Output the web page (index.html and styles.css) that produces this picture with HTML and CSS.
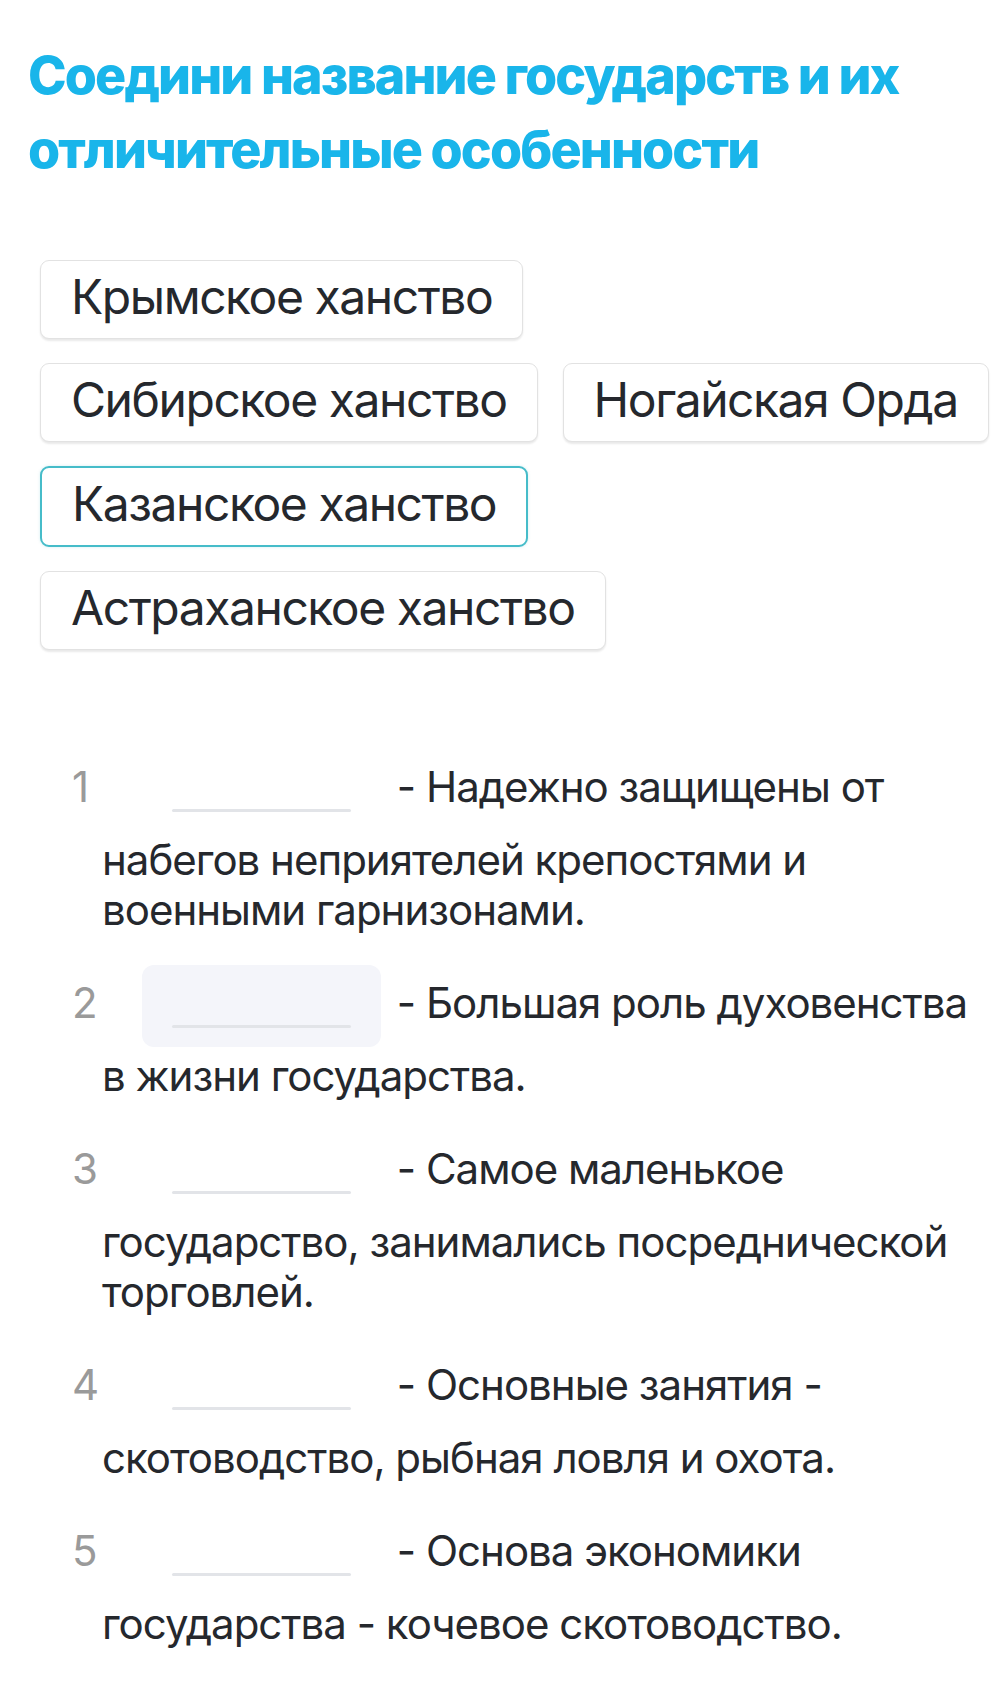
FILE: index.html
```html
<!DOCTYPE html>
<html lang="ru">
<head>
<meta charset="utf-8">
<title>Соедини</title>
<link rel="stylesheet" href="styles.css">
</head>
<body>
<div class="page">
  <h1 class="title">Соедини название государств и их отличительные особенности</h1>

  <div class="chips">
    <div class="chip">Крымское ханство</div>
    <div class="chip">Сибирское ханство</div>
    <div class="chip">Ногайская Орда</div>
    <div class="chip chip-active">Казанское ханство</div>
    <div class="chip">Астраханское ханство</div>
  </div>

  <ol class="list">
    <li class="item">
      <span class="num">1</span>
      <p class="text"><span class="drop"><span class="line"></span></span> - Надежно защищены от набегов неприятелей крепостями и военными гарнизонами.</p>
    </li>
    <li class="item">
      <span class="num">2</span>
      <p class="text"><span class="drop drop-hover"><span class="line"></span></span> - Большая роль духовенства в жизни государства.</p>
    </li>
    <li class="item">
      <span class="num">3</span>
      <p class="text"><span class="drop"><span class="line"></span></span> - Самое маленькое государство, занимались посреднической торговлей.</p>
    </li>
    <li class="item">
      <span class="num">4</span>
      <p class="text"><span class="drop"><span class="line"></span></span> - Основные занятия - скотоводство, рыбная ловля и охота.</p>
    </li>
    <li class="item">
      <span class="num">5</span>
      <p class="text"><span class="drop"><span class="line"></span></span> - Основа экономики государства - кочевое скотоводство.</p>
    </li>
  </ol>
</div>
</body>
</html>
```

FILE: styles.css
```css
* { box-sizing: border-box; }

html, body {
  margin: 0;
  padding: 0;
  background: #ffffff;
}

body {
  font-family: "Inter", "Roboto", "Noto Sans", sans-serif;
  color: #25282d;
}

.page {
  width: 1004px;
  padding: 39px 0 40px 0;
}

.title {
  margin: 0;
  padding: 0 40px 0 28px;
  font-size: 52px;
  line-height: 74px;
  font-weight: 800;
  color: #19b5ea;
  letter-spacing: -1.9px;
}

.chips {
  display: flex;
  flex-wrap: wrap;
  gap: 24px 25px;
  margin: 73px 8px 0 40px;
}

.chip {
  border: 1.5px solid #e2e2e2;
  border-radius: 9px;
  background: #ffffff;
  box-shadow: 0 2px 2px rgba(0, 0, 0, 0.09);
  padding: 7px 30px 12px 30px;
  font-size: 48px;
  line-height: 58px;
  font-weight: 400;
  letter-spacing: -1.45px;
  color: #25282d;
  white-space: nowrap;
}

.chip-active {
  border: 2px solid #46bcc9;
  box-shadow: 0 0 3px rgba(70, 188, 201, 0.25);
}

.list {
  list-style: none;
  margin: 99px 19px 0 72px;
  padding: 0;
  display: flex;
  flex-direction: column;
  gap: 30px;
}

.item {
  display: flex;
  align-items: baseline;
}

.num {
  flex: 0 0 30px;
  font-size: 42px;
  line-height: 50px;
  color: #9a9a9a;
  letter-spacing: -1px;
}

.text {
  flex: 1 1 auto;
  margin: 0;
  font-size: 42px;
  line-height: 50px;
  letter-spacing: -1px;
  color: #25282d;
}

.drop {
  display: inline-block;
  width: 239px;
  height: 82px;
  margin: 0 5px 4px 40px;
  vertical-align: -33px;
  border-radius: 12px;
  position: relative;
}

.drop-hover {
  background: #f4f5fa;
}

.line {
  display: block;
  position: absolute;
  left: 30px;
  right: 30px;
  bottom: 19px;
  height: 3px;
  border-radius: 2px;
  background: #e2e4e8;
}
```
